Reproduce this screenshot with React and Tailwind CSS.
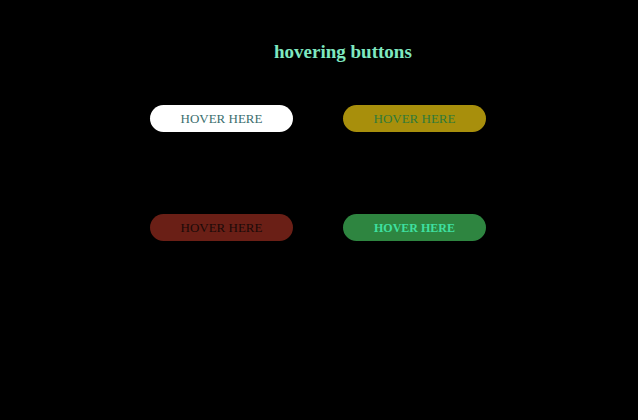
export default function App() {
  const btn =
    "w-[143px] h-[27px] rounded-full uppercase flex items-center justify-center";
  return (
    <div className="w-[638px] h-[420px] bg-black font-['Liberation_Serif',serif]">
      <h1 className="pt-[40px] pl-[274px] text-[19px] font-bold text-[#7fe8c0] leading-[24px]">
        hovering buttons
      </h1>
      <div className="grid grid-cols-[143px_143px] gap-x-[50px] gap-y-[82px] pl-[150px] pt-[41px]">
        <button className={`${btn} text-[13px] bg-white text-[#3a6e6e]`}>hover here</button>
        <button className={`${btn} text-[13px] bg-[#a88f0c] text-[#2f7a3a]`}>hover here</button>
        <button className={`${btn} text-[13px] bg-[#6a1f16] text-[#1a0a08]`}>hover here</button>
        <button className={`${btn} text-[12px] bg-[#2e8540] text-[#3ee0a0] font-bold`}>hover here</button>
      </div>
    </div>
  );
}
